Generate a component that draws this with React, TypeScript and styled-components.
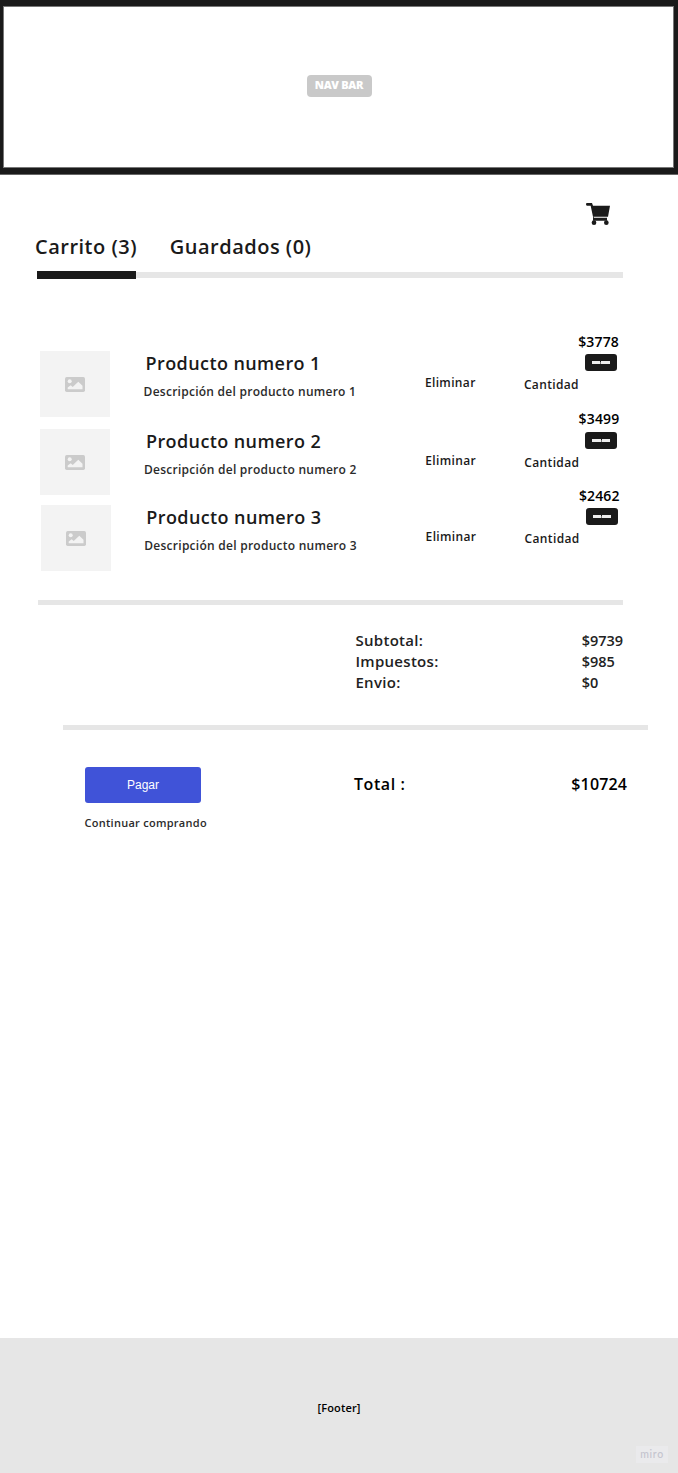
import React from "react";
import styled, { createGlobalStyle } from "styled-components";

const Global = createGlobalStyle`
  * { box-sizing: border-box; }
  body { margin: 0; background: #fff; }
`;

const Page = styled.div`
  display: flex;
  flex-direction: column;
  width: 678px;
  height: 1473px;
  color: #1a1a1a;
  font-family: "Open Sans", "Noto Sans", sans-serif;
  font-weight: 650;
  white-space: nowrap;
  overflow: hidden;
`;

const NavBar = styled.header`
  display: flex;
  height: 175px;
  flex: none;
  padding: 6px 4px 7px 3px;
  background: linear-gradient(#1a1a1a 174px, #666 174px);
`;

const NavInner = styled.div`
  flex: 1;
  display: flex;
  align-items: center;
  justify-content: center;
  background: #fff;
  border: 1px solid #777;
  padding: 0 0 2px 2px;
`;

const NavLabel = styled.span`
  width: 65px;
  height: 22px;
  border-radius: 4px;
  background: #c9c9c9;
  color: #fff;
  font: 800 11px/20px "Open Sans", sans-serif;
  letter-spacing: -0.3px;
  text-align: center;
  padding-right: 1px;
`;

const CartSlot = styled.div`
  display: flex;
  justify-content: flex-end;
  padding: 28px 67px 0 0;
  height: 58px;
`;

const Tabs = styled.nav`
  display: flex;
  gap: 32.7px;
  padding-left: 35px;
  height: 38px;
`;

const Tab = styled.span`
  font-size: 20px;
  line-height: 28px;
  letter-spacing: 0.5px;
`;

const Progress = styled.div`
  display: flex;
  align-items: center;
  height: 7.5px;
  margin: 0 55px 0 37.3px;
`;

const ProgressDone = styled.div`
  width: 98.4px;
  height: 7.5px;
  background: #1a1a1a;
`;

const ProgressTrack = styled.div`
  flex: 1;
  height: 5.5px;
  background: #e6e6e6;
`;

const List = styled.ul`
  list-style: none;
  margin: 0;
  padding: 52.5px 50px 0 40px;
`;

const Row = styled.li<{ $height: number; $shift: number }>`
  display: flex;
  align-items: flex-start;
  height: ${(p) => p.$height}px;
  padding-left: ${(p) => p.$shift}px;
`;

const Thumb = styled.div`
  flex: none;
  display: flex;
  align-items: center;
  justify-content: center;
  width: 70px;
  height: 66px;
  margin-top: 20px;
  background: #f3f3f3;
`;

const Details = styled.div`
  flex: none;
  width: 314.9px;
  padding: 20px 0 0 33.6px;
`;

const Name = styled.div`
  padding-left: 2px;
  font-size: 18px;
  line-height: 24px;
  letter-spacing: 0.4px;
`;

const Description = styled.div`
  margin-top: 8px;
  font-size: 12px;
  line-height: 18px;
  letter-spacing: 0.26px;
  color: #2b2b2b;
`;

const Action = styled.span<{ $top: number; $width: number }>`
  flex: none;
  width: ${(p) => p.$width}px;
  padding-top: ${(p) => p.$top}px;
  font-size: 12px;
  line-height: 18px;
  letter-spacing: 0.36px;
`;

const Side = styled.div`
  display: flex;
  flex-direction: column;
  height: 40px;
`;

const Price = styled.span<{ $drop: number }>`
  height: 23px;
  padding-top: ${(p) => p.$drop}px;
  padding-left: 0.3px;
  font-size: 14px;
  line-height: 20px;
  letter-spacing: 0.15px;
  color: #000;
`;

const Quantity = styled.div`
  display: flex;
  align-items: center;
  justify-content: center;
  gap: 1px;
  width: 32px;
  height: 17px;
  margin-left: 7px;
  border-radius: 3px;
  background: linear-gradient(90deg, #1a1a1a 7px, #777 7px 25px, #1a1a1a 25px) center / 100% 2px no-repeat #1a1a1a;
`;

const Dash = styled.i`
  width: 8.5px;
  height: 2.5px;
  background: #eee;
`;

const Rule = styled.hr<{ $left: number; $right: number }>`
  flex: none;
  height: 5.3px;
  margin: 0 ${(p) => p.$right}px 0 ${(p) => p.$left}px;
  border: 0;
  background: #e6e6e6;
`;

const Summary = styled.dl`
  display: grid;
  grid-template-columns: 226.3px auto;
  grid-auto-rows: 21px;
  height: 120px;
  margin: 0;
  padding: 25px 0 0 355.4px;
  font-size: 14.5px;
  line-height: 21px;
  color: #222;
  dt, dd { margin: 0; }
  dt { font-size: 15px; letter-spacing: 0.3px; }
`;

const Checkout = styled.section`
  display: flex;
  align-items: flex-start;
  padding: 36.5px 0 0 84.5px;
`;

const PayColumn = styled.div`
  display: flex;
  flex-direction: column;
  width: 269.5px;
`;

const PayButton = styled.button`
  width: 116px;
  height: 36px;
  padding: 1px 0 0 1px;
  border: 0;
  border-radius: 3px;
  background: #4053d8;
  color: #fff;
  font: 12px/34px "Liberation Sans", Arial, sans-serif;
`;

const Continue = styled.a`
  margin-top: 11px;
  font-size: 11px;
  line-height: 18px;
  letter-spacing: 0.27px;
  color: #2b2b2b;
`;

const TotalLabel = styled.span`
  width: 217.3px;
  padding-top: 5px;
  font-size: 16px;
  line-height: 24px;
  letter-spacing: 0.58px;
  color: #000;
`;

const TotalValue = styled(TotalLabel)`
  width: auto;
  letter-spacing: 0.15px;
`;

const Footer = styled.footer`
  position: relative;
  display: flex;
  align-items: center;
  justify-content: center;
  height: 135px;
  margin-top: auto;
  padding-top: 4px;
  background: #e6e6e6;
  color: #000;
  font-size: 11px;
  letter-spacing: 0.15px;
`;

const Watermark = styled.span`
  position: absolute;
  right: 10px;
  bottom: 10px;
  width: 32px;
  height: 17px;
  background: #eaeaec;
  color: #c4c4ce;
  font: 500 10.5px/16px Lato, sans-serif;
  letter-spacing: 0.7px;
  text-align: center;
`;

const CartIcon = () => (
  <svg width="25" height="23" viewBox="0 0 75 69" fill="#1a1a1a">
    <path d="M3 0h15l3 8h51l-6 33H21L14 8H3Q0 8 0 4Q0 0 3 0Z" />
    <path d="M21 38l3 6h39v9H21Z" />
    <circle cx="24" cy="59" r="7" />
    <circle cx="61" cy="59" r="7" />
  </svg>
);

const ImageIcon = () => (
  <svg width="20" height="15" viewBox="0 0 20 15">
    <rect width="20" height="15" rx="1.700" fill="#cbcbcb" />
    <circle cx="4.700" cy="4.200" r="2" fill="#f3f3f3" />
    <path d="M2.700 12.300V10.600L5.700 8.200L7.700 10L13.300 4.800L17.500 8.800V12.300Z" fill="#f3f3f3" />
  </svg>
);

const products = [
  { id: 1, price: "$3778", height: 78, shift: 0, drop: 1 },
  { id: 2, price: "$3499", height: 76, shift: 0.4, drop: 0 },
  { id: 3, price: "$2462", height: 114.7, shift: 0.7, drop: 0.6 },
];

export default function App() {
  return (
    <Page>
      <Global />
      <NavBar>
        <NavInner>
          <NavLabel>NAV BAR</NavLabel>
        </NavInner>
      </NavBar>
      <CartSlot>
        <CartIcon />
      </CartSlot>
      <Tabs>
        <Tab>Carrito (3)</Tab>
        <Tab>Guardados (0)</Tab>
      </Tabs>
      <Progress>
        <ProgressDone />
        <ProgressTrack />
      </Progress>
      <List>
        {products.map((p) => (
          <Row key={p.id} $height={p.height} $shift={p.shift}>
            <Thumb>
              <ImageIcon />
            </Thumb>
            <Details>
              <Name>Producto numero {p.id}</Name>
              <Description>Descripción del producto numero {p.id}</Description>
            </Details>
            <Action $top={43} $width={99}>
              Eliminar
            </Action>
            <Action $top={45} $width={54}>
              Cantidad
            </Action>
            <Side>
              <Price $drop={p.drop}>{p.price}</Price>
              <Quantity>
                <Dash />
                <Dash />
              </Quantity>
            </Side>
          </Row>
        ))}
      </List>
      <Rule $left={38} $right={55} />
      <Summary>
        <dt>Subtotal:</dt>
        <dd>$9739</dd>
        <dt>Impuestos:</dt>
        <dd>$985</dd>
        <dt>Envio:</dt>
        <dd>$0</dd>
      </Summary>
      <Rule $left={63} $right={30} />
      <Checkout>
        <PayColumn>
          <PayButton>Pagar</PayButton>
          <Continue>Continuar comprando</Continue>
        </PayColumn>
        <TotalLabel>Total :</TotalLabel>
        <TotalValue>$10724</TotalValue>
      </Checkout>
      <Footer>
        [Footer]
        <Watermark>miro</Watermark>
      </Footer>
    </Page>
  );
}
